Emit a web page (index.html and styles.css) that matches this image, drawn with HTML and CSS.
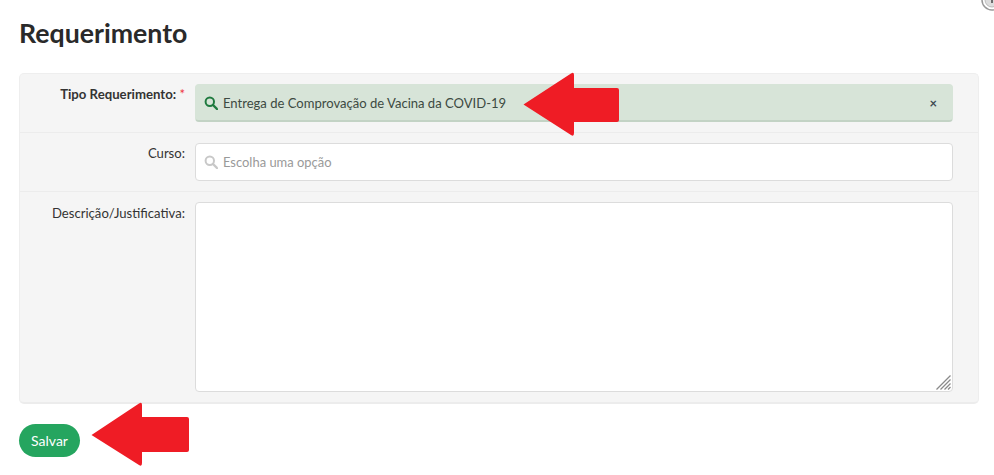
FILE: index.html
```html
<!DOCTYPE html>
<html lang="pt-BR">
<head>
<meta charset="utf-8">
<title>Requerimento</title>
<link rel="stylesheet" href="styles.css">
</head>
<body>
<svg class="corner-mark" width="16" height="12" viewBox="0 0 16 12"><circle cx="14" cy="0" r="10" fill="#fff" stroke="#999" stroke-width="1.5"/><circle cx="14" cy="0" r="7" fill="#ddd" stroke="#bbb"/><path d="M14 0v3" stroke="#444" stroke-width="1.5"/></svg>
<h1 class="title">Requerimento</h1>
<form class="panel">
  <div class="row row-first">
    <label class="label label-strong">Tipo Requerimento: <span class="req">*</span></label>
    <div class="control">
      <div class="select select-filled">
        <svg class="search" width="14" height="14" viewBox="0 0 14 14"><circle cx="5.8" cy="5.8" r="4.2" fill="none" stroke="#1f7a3f" stroke-width="2"/><path d="M9 9l4 4" stroke="#1f7a3f" stroke-width="2.4" stroke-linecap="round"/></svg>
        <span class="value">Entrega de Comprovação de Vacina da COVID-19</span>
        <span class="clear">×</span>
      </div>
    </div>
  </div>
  <div class="row row-second">
    <label class="label">Curso:</label>
    <div class="control">
      <div class="select">
        <svg class="search" width="14" height="14" viewBox="0 0 14 14"><circle cx="5.8" cy="5.8" r="4.2" fill="none" stroke="#c8c8c8" stroke-width="2"/><path d="M9 9l4 4" stroke="#c8c8c8" stroke-width="2.4" stroke-linecap="round"/></svg>
        <span class="placeholder">Escolha uma opção</span>
      </div>
    </div>
  </div>
  <div class="row row-last">
    <label class="label">Descrição/Justificativa:</label>
    <div class="control control-area">
      <textarea class="textarea"></textarea>
      <svg class="grip" width="15" height="15" viewBox="0 0 15 15"><path d="M0.500 14.500L14.500 0.500M4.500 14.500L14.500 4.500M8.500 14.500L14.500 8.500M12 14.500L14.500 12" stroke="#8a8a8a" stroke-width="1.300" fill="none"/></svg>
    </div>
  </div>
</form>
<button class="save" type="button">Salvar</button>
<svg class="arrow arrow-top" width="99" height="66" viewBox="0 0 99 66"><path d="M1.500 32.500L49 1.500Q52 -.5 52 3V16H95Q97 16 97 18V48Q97 50 95 50H52V61Q52 65 49 63Z" fill="#ef1c25"/></svg>
<svg class="arrow arrow-bottom" width="100" height="66" viewBox="0 0 100 66"><path d="M1.500 33L49 1.500Q52 -.5 52 3V15H97Q99 15 99 17V48Q99 50 97 50H52V61Q52 65 49 63Z" fill="#ef1c25"/></svg>
</body>
</html>
```
FILE: styles.css
```css
* { box-sizing: border-box; }
html, body { margin: 0; height: 475px; overflow: hidden; background: #fff; }
body {
  position: relative;
  padding: 17px 15px 0 19px;
  font-family: Lato, "Liberation Sans", sans-serif;
  font-size: 13px;
  color: #333;
}
.title {
  margin: 0 0 23px;
  height: 33px;
  line-height: 33px;
  font-size: 26.7px;
  font-weight: 700;
  color: #2a2a2a;
}
.panel {
  width: 960px;
  height: 331px;
  display: flex;
  flex-direction: column;
  background: #f5f5f5;
  border: 1px solid #eee;
  border-bottom: 2px solid #ececec;
  border-radius: 5px;
}
.row {
  display: flex;
  gap: 10px;
  border-bottom: 1px solid #ececec;
}
.row-first { height: 59px; padding-top: 10px; }
.row-second { height: 59px; padding-top: 10px; }
.row-last { flex: 1; padding-top: 10px; border-bottom: 0; align-items: flex-start; }
.label {
  width: 165px;
  flex: none;
  padding-top: 2px;
  text-align: right;
  line-height: 16px;
  font-size: 13.1px;
  color: #333;
}
.row-last .label { padding-top: 3px; }
.label-strong { font-weight: 700; font-size: 13.2px; }
.req { color: #ef3340; font-weight: 400; }
.control { width: 758px; flex: none; }
.control-area { position: relative; height: 190px; }
.select {
  height: 38px;
  display: flex;
  align-items: center;
  padding: 0 15px 0 8px;
  background: #fff;
  border: 1px solid #dcdcdc;
  border-radius: 4px;
}
.select-filled {
  background: #d7e4d8;
  border-color: #d7e4d8;
  border-bottom: 2px solid #c3d3c5;
  color: #3d4a42;
}
.search { flex: none; margin-right: 5px; }
.value { flex: 1; font-size: 13.05px; }
.clear { font-size: 13px; font-weight: 700; color: #3d4a52; }
.placeholder { color: #999; font-size: 12.95px; }
.textarea {
  display: block;
  width: 100%;
  height: 190px;
  background: #fff;
  border: 1px solid #dcdcdc;
  border-radius: 4px;
  outline: 0;
  resize: none;
}
.grip { position: absolute; right: 2px; bottom: 2px; }
.save {
  display: block;
  width: 61px;
  height: 33px;
  margin-top: 20px;
  padding: 0;
  border: 0;
  border-radius: 17px;
  background: #25a55f;
  color: #fff;
  font: 400 14px Lato, "Liberation Sans", sans-serif;
}
.arrow { position: absolute; }
.arrow-top { left: 522px; top: 72px; }
.arrow-bottom { left: 90px; top: 402px; }
.corner-mark { position: absolute; right: 0; top: 0; }
```
